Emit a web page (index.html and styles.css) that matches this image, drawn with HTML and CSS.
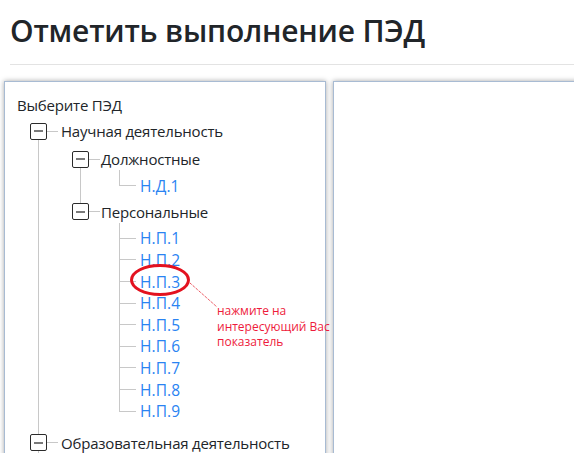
FILE: index.html
```
<!DOCTYPE html>
<html lang="ru">
<head>
<meta charset="utf-8">
<title>Отметить выполнение ПЭД</title>
<link rel="stylesheet" href="styles.css">
</head>
<body>
<h1 class="title">Отметить выполнение ПЭД</h1>
<hr class="rule">
<div class="panels">
  <div class="panel panel-tree">
    <div class="caption">Выберите ПЭД</div>
    <ul class="tree">
      <li class="node">
        <div class="row"><span class="toggle"></span><span class="conn"></span><span class="label">Научная деятельность</span></div>
        <ul class="sub">
          <li class="node">
            <div class="row"><span class="toggle"></span><span class="conn"></span><span class="label">Должностные</span></div>
            <ul class="leaves">
              <li class="leaf"><span class="lconn"></span><a href="#">Н.Д.1</a></li>
            </ul>
          </li>
          <li class="node last">
            <div class="row"><span class="toggle"></span><span class="conn"></span><span class="label">Персональные</span></div>
            <ul class="leaves">
              <li class="leaf"><span class="lconn"></span><a href="#">Н.П.1</a></li>
              <li class="leaf"><span class="lconn"></span><a href="#">Н.П.2</a></li>
              <li class="leaf"><span class="lconn"></span><a href="#">Н.П.3</a></li>
              <li class="leaf"><span class="lconn"></span><a href="#">Н.П.4</a></li>
              <li class="leaf"><span class="lconn"></span><a href="#">Н.П.5</a></li>
              <li class="leaf"><span class="lconn"></span><a href="#">Н.П.6</a></li>
              <li class="leaf"><span class="lconn"></span><a href="#">Н.П.7</a></li>
              <li class="leaf"><span class="lconn"></span><a href="#">Н.П.8</a></li>
              <li class="leaf"><span class="lconn"></span><a href="#">Н.П.9</a></li>
            </ul>
          </li>
        </ul>
      </li>
      <li class="node">
        <div class="row"><span class="toggle"></span><span class="conn"></span><span class="label">Образовательная деятельность</span></div>
      </li>
    </ul>
    <svg class="mark" width="120" height="60" viewBox="0 0 120 60">
      <ellipse cx="30" cy="17" rx="28.5" ry="14.5" fill="none" stroke="#e3121f" stroke-width="3"/>
      <line x1="60" y1="20" x2="87" y2="44" stroke="#e3121f" stroke-width="1" stroke-dasharray="1 1"/>
    </svg>
    <div class="hint">нажмите на<br>интересующий Вас<br>показатель</div>
  </div>
  <div class="panel panel-view"></div>
</div>
</body>
</html>
```

FILE: styles.css
```
html, body {
  margin: 0;
  padding: 0;
  background: #ffffff;
  overflow: hidden;
}
body {
  font-family: "Open Sans", "Noto Sans", sans-serif;
  color: #212529;
  width: 574px;
  height: 453px;
}
.title {
  margin: 0;
  padding: 12px 0 0 10px;
  font-size: 30px;
  line-height: 38px;
  font-weight: 600;
  letter-spacing: -0.2px;
  color: #212529;
}
.rule {
  margin: 14px 0 0 10px;
  border: 0;
  border-top: 1px solid #e3e3e3;
  height: 0;
}
.panels {
  display: flex;
  gap: 7px;
  margin-top: 16px;
  padding-left: 4px;
}
.panel {
  border: 1px solid #a8bbd3;
  box-shadow: 0 0 5px rgba(0, 0, 0, 0.35);
  height: 420px;
  background: #fff;
  box-sizing: border-box;
}
.panel-tree {
  width: 322px;
  flex: none;
  position: relative;
  padding: 12px 0 0 12px;
}
.panel-view {
  flex: 1;
  margin-right: -20px;
}
.caption {
  font-size: 15px;
  line-height: 22px;
  letter-spacing: -0.2px;
}
.tree, .sub, .leaves {
  list-style: none;
  margin: 0;
  padding: 0;
}
.tree {
  padding-left: 13px;
  margin-top: 2px;
}
.node {
  position: relative;
}
.node::before {
  content: "";
  position: absolute;
  left: 8px;
  top: 21px;
  bottom: -5px;
  border-left: 1px solid #c8c8c8;
}
.node.last::before {
  display: none;
}
.row {
  display: flex;
  align-items: center;
  height: 26px;
  font-size: 15px;
  letter-spacing: -0.2px;
}
.toggle {
  width: 15px;
  height: 15px;
  border: 1px solid #2b2b2b;
  border-radius: 2px;
  box-sizing: content-box;
  position: relative;
  display: flex;
  align-items: center;
  justify-content: center;
  flex: none;
  background: #fff;
}
.toggle::after {
  content: "";
  width: 9px;
  height: 2px;
  background: #7a7a7a;
}
.conn {
  width: 11px;
  height: 1px;
  background: #c8c8c8;
  flex: none;
}
.label {
  padding-left: 3px;
}
.sub {
  padding: 2px 0 6px 42px;
}
.sub .label {
  padding-left: 1px;
}
.leaves {
  position: relative;
  padding: 3px 0 2px 47px;
}
.leaves::before {
  content: "";
  position: absolute;
  left: 47px;
  top: -2px;
  bottom: 13px;
  border-left: 1px solid #c8c8c8;
}
.leaf {
  display: flex;
  align-items: center;
  height: 21.6px;
  font-size: 15.5px;
}
.lconn {
  width: 17px;
  height: 1px;
  background: #c8c8c8;
  flex: none;
}
.leaf a {
  color: #2a83f2;
  text-decoration: none;
  padding-left: 4px;
  letter-spacing: 0.1px;
}
.mark {
  position: absolute;
  left: 125px;
  top: 181px;
}
.hint {
  position: absolute;
  left: 212px;
  top: 221px;
  font-size: 12px;
  line-height: 15.5px;
  color: #ee1b3c;
  white-space: nowrap;
}
```
